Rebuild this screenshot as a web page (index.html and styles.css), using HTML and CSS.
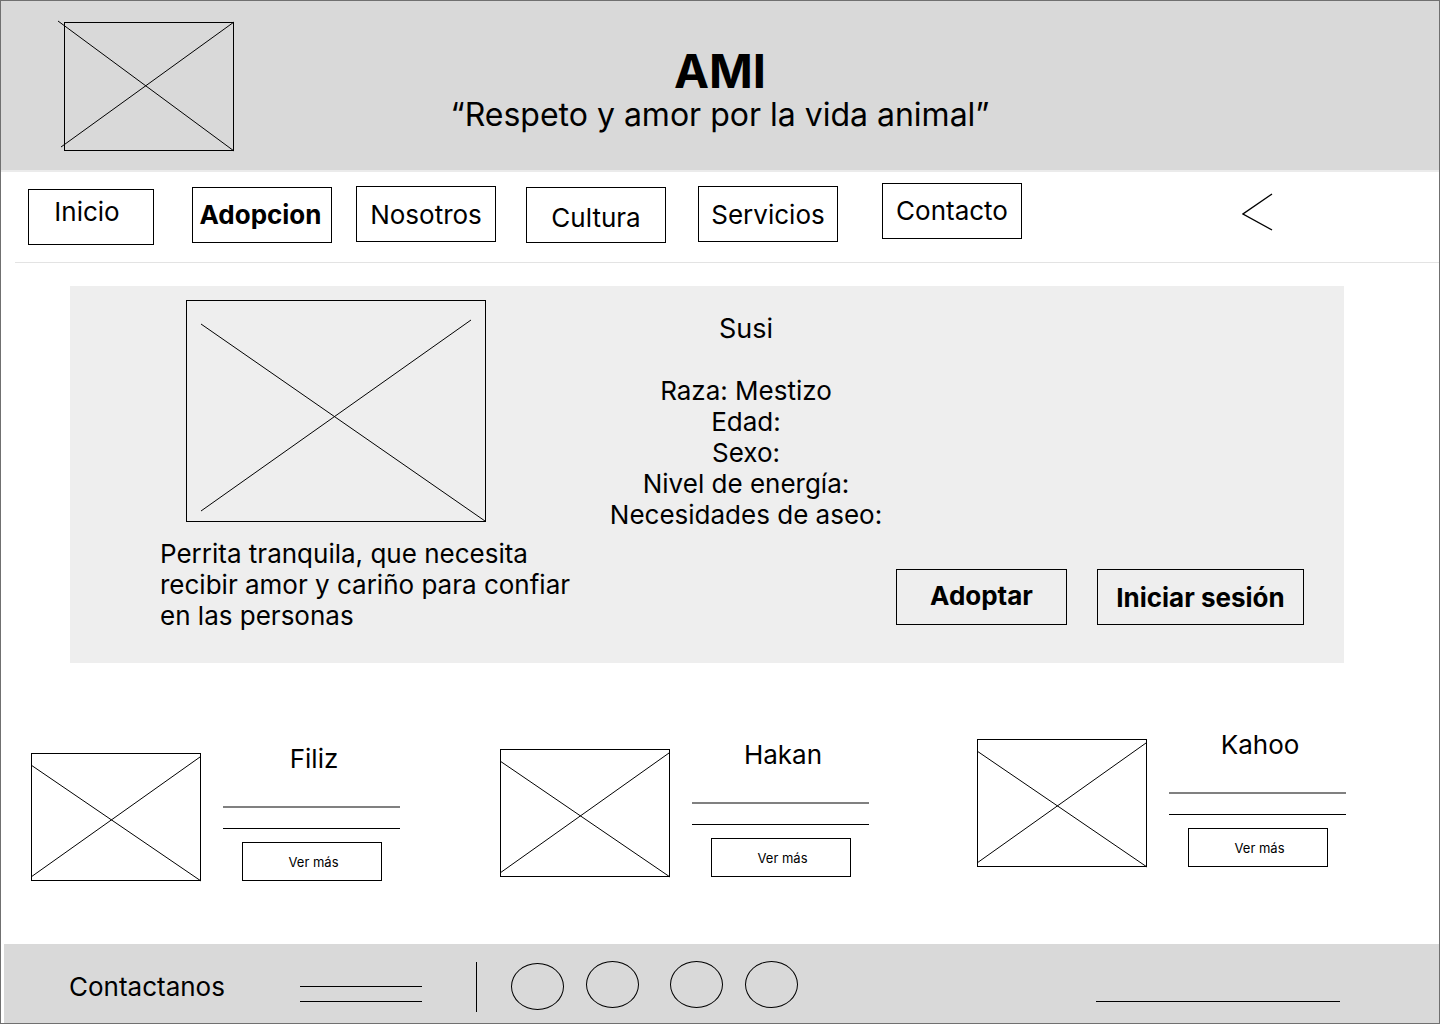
FILE: index.html
```html
<!DOCTYPE html>
<html lang="es">
<head>
    <meta charset="UTF-8">
    <meta name="viewport" content="width=device-width, initial-scale=1.0">
    <title>AMI - Adopcion</title>
    <link rel="stylesheet" href="styles.css">
</head>
<body>
    <div class="frame">
        <header class="top">
            <div class="ph ph-logo">
                <svg viewBox="0 0 170 128" width="170" height="128">
                    <line x1="-6" y1="-1" x2="170" y2="129" />
                    <line x1="-3" y1="125" x2="170" y2="0" />
                </svg>
            </div>
            <div class="brand">
                <h1>AMI</h1>
                <p>“Respeto y amor por la vida animal”</p>
            </div>
            <div></div>
        </header>

        <nav class="menu">
            <a href="#" class="menu-item item-inicio">Inicio</a>
            <a href="#" class="menu-item item-adopcion">Adopcion</a>
            <a href="#" class="menu-item item-nosotros">Nosotros</a>
            <a href="#" class="menu-item item-cultura">Cultura</a>
            <a href="#" class="menu-item item-servicios">Servicios</a>
            <a href="#" class="menu-item item-contacto">Contacto</a>
            <svg class="chevron" viewBox="0 0 31 38" width="31" height="38">
                <polyline points="30,1 1,21 30,37" />
            </svg>
        </nav>

        <section class="featured">
            <div class="featured-media">
                <div class="ph ph-large">
                    <svg viewBox="0 0 300 222" width="300" height="222">
                        <line x1="15" y1="24" x2="299" y2="221" />
                        <line x1="15" y1="211" x2="285" y2="20" />
                    </svg>
                </div>
                <p class="featured-text">Perrita tranquila, que necesita recibir amor y cariño para confiar en las personas</p>
            </div>
            <div class="featured-info">
                <div class="facts">
                    <h2>Susi</h2>
                    <p>Raza: Mestizo<br>Edad:<br>Sexo:<br>Nivel de energía:<br>Necesidades de aseo:</p>
                </div>
                <div class="actions">
                    <a href="#" class="btn btn-adoptar">Adoptar</a>
                    <a href="#" class="btn btn-login">Iniciar sesión</a>
                </div>
            </div>
        </section>

        <section class="pets">
            <div class="pet pet-filiz">
                <div class="ph ph-small">
                    <svg viewBox="0 0 170 128" width="170" height="128">
                        <line x1="0" y1="12" x2="170" y2="128" />
                        <line x1="0" y1="124" x2="169" y2="4" />
                    </svg>
                </div>
                <div class="pet-info">
                    <h3>Filiz</h3>
                    <span class="rule rule-gray"></span>
                    <span class="rule"></span>
                    <a href="#" class="more">Ver más</a>
                </div>
            </div>
            <div class="pet pet-hakan">
                <div class="ph ph-small">
                    <svg viewBox="0 0 170 128" width="170" height="128">
                        <line x1="0" y1="12" x2="170" y2="128" />
                        <line x1="0" y1="124" x2="169" y2="4" />
                    </svg>
                </div>
                <div class="pet-info">
                    <h3>Hakan</h3>
                    <span class="rule rule-gray"></span>
                    <span class="rule"></span>
                    <a href="#" class="more">Ver más</a>
                </div>
            </div>
            <div class="pet pet-kahoo">
                <div class="ph ph-small">
                    <svg viewBox="0 0 170 128" width="170" height="128">
                        <line x1="0" y1="12" x2="170" y2="128" />
                        <line x1="0" y1="124" x2="169" y2="4" />
                    </svg>
                </div>
                <div class="pet-info">
                    <h3>Kahoo</h3>
                    <span class="rule rule-gray"></span>
                    <span class="rule"></span>
                    <a href="#" class="more">Ver más</a>
                </div>
            </div>
        </section>

        <footer class="bottom">
            <span class="bottom-title">Contactanos</span>
            <div class="bottom-lines">
                <span class="rule"></span>
                <span class="rule"></span>
            </div>
            <span class="divider"></span>
            <div class="socials">
                <span class="social"></span>
                <span class="social"></span>
                <span class="social social-gap"></span>
                <span class="social"></span>
            </div>
            <span class="rule bottom-rule"></span>
        </footer>
    </div>
</body>
</html>
```

FILE: styles.css
```css
body {
    margin: 0;
    font-family: Inter, "Noto Sans", sans-serif;
    color: #000;
    background: #fff;
}
a {
    color: #000;
    text-decoration: none;
}
.frame {
    width: 1440px;
    height: 1024px;
    box-sizing: border-box;
    border: 1px solid #707070;
    display: flex;
    flex-direction: column;
    overflow: hidden;
}

/* Placeholders (crossed boxes) */
.ph {
    box-sizing: border-box;
    border: 1px solid #000;
    position: relative;
}
.ph svg {
    position: absolute;
    left: -1px;
    top: -1px;
    overflow: visible;
}
.ph line {
    stroke: #000;
    stroke-width: 1;
}

/* Header */
.top {
    height: 171px;
    box-sizing: border-box;
    background: #d9d9d9;
    border-bottom: 2px solid #ebebeb;
    display: grid;
    grid-template-columns: 1fr auto 1fr;
    align-items: start;
}
.ph-logo {
    width: 170px;
    height: 129px;
    margin: 21px 0 0 63px;
}
.brand {
    margin-top: 44px;
    text-align: center;
}
.brand h1 {
    margin: 0;
    font-size: 47px;
    line-height: 52px;
    font-weight: 700;
}
.brand p {
    margin: 0;
    font-size: 32px;
    line-height: 36px;
}

/* Navigation */
.menu {
    height: 91px;
    box-sizing: border-box;
    margin-left: 14px;
    padding: 11px 0 0 13px;
    border-bottom: 1px solid #e3e3e3;
    display: flex;
    align-items: flex-start;
}
.menu-item {
    width: 140px;
    height: 56px;
    box-sizing: border-box;
    border: 1px solid #000;
    display: flex;
    align-items: center;
    justify-content: center;
    font-size: 26px;
}
.item-inicio {
    width: 126px;
    margin-top: 6px;
    padding: 0 8px 11px 0;
}
.item-adopcion {
    margin: 4px 0 0 38px;
    font-weight: 700;
    padding: 0 3px 2px 0;
}
.item-nosotros {
    margin: 3px 0 0 24px;
}
.item-cultura {
    margin: 4px 0 0 30px;
    padding-top: 4px;
}
.item-servicios {
    margin: 3px 0 0 32px;
}
.item-contacto {
    margin-left: 44px;
    padding-bottom: 2px;
}
.chevron {
    margin: 10px 166px 0 auto;
}
.chevron polyline {
    fill: none;
    stroke: #000;
    stroke-width: 1.4;
}

/* Featured pet */
.featured {
    width: 1274px;
    height: 377px;
    margin: 23px 0 0 69px;
    background: #eeeeee;
    display: grid;
    grid-template-columns: 520px 1fr;
}
.ph-large {
    width: 300px;
    height: 222px;
    margin: 14px 0 0 116px;
}
.featured-text {
    width: 425px;
    margin: 16px 0 0 90px;
    font-size: 26px;
    line-height: 31px;
}
.facts {
    width: 312px;
    padding-top: 27px;
    text-align: center;
    font-size: 26px;
    line-height: 31px;
}
.facts h2 {
    margin: 0 0 31px;
    font-size: 27px;
    font-weight: 400;
    line-height: 31px;
}
.facts p {
    margin: 0;
}
.actions {
    display: flex;
    gap: 30px;
    margin: 39px 0 0 306px;
}
.btn {
    height: 56px;
    box-sizing: border-box;
    border: 1px solid #000;
    display: flex;
    align-items: center;
    justify-content: center;
    font-size: 26px;
    font-weight: 700;
}
.btn-adoptar {
    width: 171px;
    padding-bottom: 4px;
}
.btn-login {
    width: 207px;
}

/* Other pets */
.pets {
    display: flex;
    align-items: flex-start;
    margin: 76px 0 0 30px;
}
.pet {
    display: flex;
    align-items: flex-start;
    gap: 22px;
}
.pet-filiz {
    margin-top: 14px;
}
.pet-hakan {
    margin: 10px 0 0 100px;
}
.pet-kahoo {
    margin-left: 108px;
}
.ph-small {
    width: 170px;
    height: 128px;
}
.pet-info {
    width: 177px;
    margin-top: -9px;
    display: flex;
    flex-direction: column;
    align-items: center;
}
.pet-info h3 {
    margin: 0 0 32px;
    padding-left: 5px;
    font-size: 26px;
    font-weight: 400;
    line-height: 30px;
}
.rule {
    display: block;
    width: 100%;
    height: 1px;
    background: #000;
}
.rule-gray {
    height: 2px;
    background: #808080;
    margin-bottom: 20px;
}
.more {
    width: 140px;
    height: 39px;
    box-sizing: border-box;
    margin-top: 13px;
    padding-left: 4px;
    border: 1px solid #000;
    display: flex;
    align-items: center;
    justify-content: center;
    font-size: 13px;
}

/* Footer */
.bottom {
    margin: auto 0 0 3px;
    height: 79px;
    background: #d9d9d9;
    display: flex;
    align-items: flex-start;
    padding-left: 65px;
}
.bottom-title {
    width: 231px;
    margin-top: 28px;
    font-size: 26px;
    line-height: 30px;
}
.bottom-lines {
    width: 122px;
    margin-top: 42px;
}
.bottom-lines .rule + .rule {
    margin-top: 14px;
}
.divider {
    width: 1px;
    height: 50px;
    margin: 18px 0 0 54px;
    background: #000;
}
.socials {
    display: flex;
    gap: 22px;
    margin: 17px 0 0 34px;
}
.social {
    width: 53px;
    height: 47px;
    box-sizing: border-box;
    border: 1px solid #000;
    border-radius: 50%;
}
.social:first-child {
    margin-top: 2px;
}
.social-gap {
    margin-left: 9px;
}
.bottom-rule {
    width: 244px;
    margin: 57px 0 0 298px;
}
```
